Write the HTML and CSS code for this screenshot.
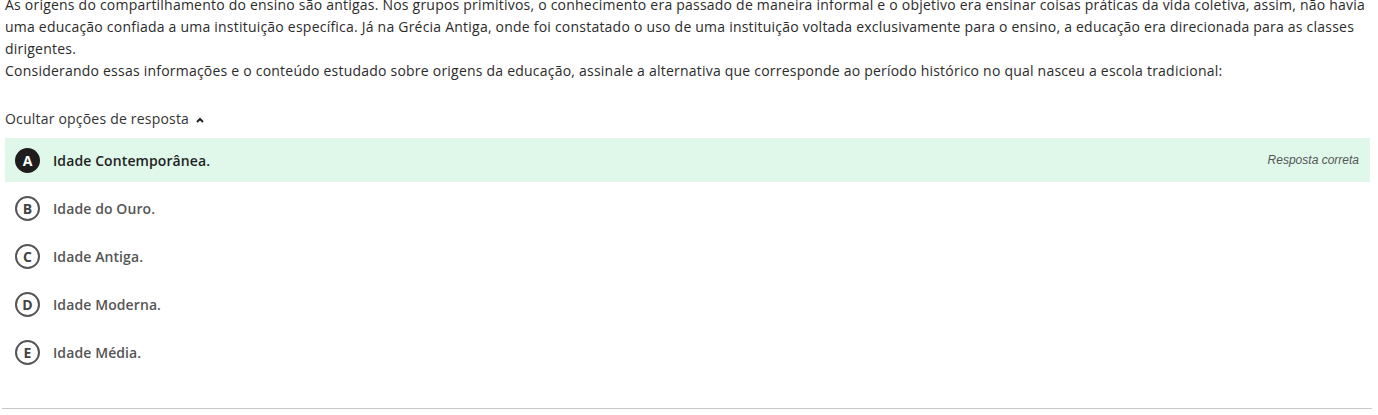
FILE: index.html
```html
<!DOCTYPE html>
<html lang="pt">
<head>
<meta charset="utf-8">
<link rel="stylesheet" href="styles.css">
</head>
<body>
<div class="question">
  <p class="statement">As origens do compartilhamento do ensino são antigas. Nos grupos primitivos, o conhecimento era passado de maneira informal e o objetivo era ensinar coisas práticas da vida coletiva, assim, não havia uma educação confiada a uma instituição específica. Já na Grécia Antiga, onde foi constatado o uso de uma instituição voltada exclusivamente para o ensino, a educação era direcionada para as classes dirigentes.<br>Considerando essas informações e o conteúdo estudado sobre origens da educação, assinale a alternativa que corresponde ao período histórico no qual nasceu a escola tradicional:</p>
  <div class="toggle">Ocultar opções de resposta <svg class="chev" width="10" height="8" viewBox="0 0 10 8"><path d="M2 6 L5 3 L8 6" fill="none" stroke="#222" stroke-width="2"/></svg></div>
  <ul class="options">
    <li class="option correct"><span class="letter">A</span><span class="text">Idade Contemporânea.</span><span class="tag">Resposta correta</span></li>
    <li class="option"><span class="letter">B</span><span class="text">Idade do Ouro.</span></li>
    <li class="option"><span class="letter">C</span><span class="text">Idade Antiga.</span></li>
    <li class="option"><span class="letter">D</span><span class="text">Idade Moderna.</span></li>
    <li class="option"><span class="letter">E</span><span class="text">Idade Média.</span></li>
  </ul>
  <hr class="sep">
</div>
</body>
</html>
```

FILE: styles.css
```css
html, body {
  margin: 0;
  padding: 0;
  background: #fff;
  overflow: hidden;
}
.question {
  font-family: "Open Sans", "Noto Sans", sans-serif;
  color: #2b2b2b;
  font-size: 14px;
  padding: 0 8px 0 5px;
}
.statement {
  margin: -6px 0 0 0;
  line-height: 22px;
  font-size: 14px;
  letter-spacing: 0.22px;
  width: 1362px;
}
.toggle {
  margin-top: 26px;
  height: 22px;
  line-height: 22px;
  display: flex;
  align-items: center;
  gap: 6px;
  color: #333;
  letter-spacing: 0.2px;
}
.chev { margin-top: 2px; }
.options {
  list-style: none;
  margin: 8px 0 0 0;
  padding: 0;
  width: 1365px;
}
.option {
  display: flex;
  align-items: center;
  height: 48px;
  padding: 0 11px 0 10px;
  box-sizing: border-box;
}
.option.correct {
  background: #e0f8ea;
  height: 44px;
  margin-bottom: 2px;
}
.letter {
  width: 21px;
  height: 21px;
  border: 2px solid #555;
  border-radius: 50%;
  display: flex;
  align-items: center;
  justify-content: center;
  font-weight: 700;
  font-size: 14px;
  color: #444;
  flex: none;
}
.correct .letter {
  background: #1e1e1e;
  border-color: #1e1e1e;
  color: #fff;
}
.text {
  margin-left: 13px;
  font-weight: 600;
  font-size: 14px;
  letter-spacing: 0.1px;
  color: #555;
}
.correct .text { color: #1f1f1f; }
.tag {
  margin-left: auto;
  font-style: italic;
  font-size: 12px;
  color: #555;
  font-family: "Liberation Sans", sans-serif;
}
.sep {
  margin: 32px 0 0 -3px;
  border: none;
  border-top: 1px solid #c8c8c8;
  width: 1370px;
}
```
